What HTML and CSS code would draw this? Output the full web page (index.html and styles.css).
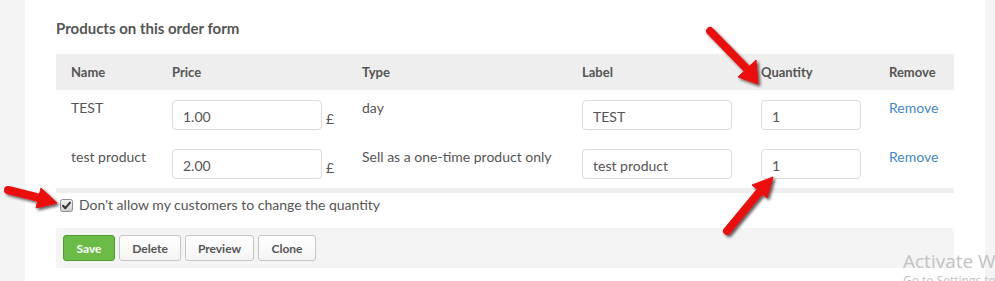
FILE: index.html
```html
<!DOCTYPE html>
<html lang="en">
<head>
<meta charset="utf-8">
<title>Products on this order form</title>
<link rel="stylesheet" href="styles.css">
</head>
<body>
<div class="page">
  <div class="panel">
    <h2 class="title">Products on this order form</h2>
    <table class="products">
      <colgroup>
        <col class="c-name"><col class="c-price"><col class="c-type"><col class="c-label"><col class="c-qty"><col class="c-remove">
      </colgroup>
      <thead>
        <tr><th>Name</th><th>Price</th><th>Type</th><th>Label</th><th>Quantity</th><th>Remove</th></tr>
      </thead>
      <tbody>
        <tr>
          <td>TEST</td>
          <td><div class="price"><input class="field field-price" type="text" value="1.00"><span class="currency">£</span></div></td>
          <td>day</td>
          <td><input class="field field-label" type="text" value="TEST"></td>
          <td><input class="field field-qty" type="text" value="1"></td>
          <td><a class="remove" href="#">Remove</a></td>
        </tr>
        <tr>
          <td class="nowrap">test product</td>
          <td><div class="price"><input class="field field-price" type="text" value="2.00"><span class="currency">£</span></div></td>
          <td class="nowrap">Sell as a one-time product only</td>
          <td><input class="field field-label" type="text" value="test product"></td>
          <td><input class="field field-qty" type="text" value="1"></td>
          <td><a class="remove" href="#">Remove</a></td>
        </tr>
      </tbody>
    </table>
    <label class="check">
      <span class="checkbox"><svg width="13" height="13" viewBox="0 0 13 13"><defs><linearGradient id="cbg" x1="0" y1="0" x2="0" y2="1"><stop offset="0" stop-color="#f2f2f2"/><stop offset="1" stop-color="#cfcfcf"/></linearGradient></defs><rect x="0.5" y="0.5" width="12" height="12" rx="2" fill="url(#cbg)" stroke="#8f8f8f"/><path d="M3 6.8 L5.3 9.2 L10 3.6" fill="none" stroke="#333" stroke-width="2" stroke-linecap="round" stroke-linejoin="round"/></svg></span>
      <span>Don't allow my customers to change the quantity</span>
    </label>
    <div class="actions">
      <button class="btn btn-save" type="button">Save</button>
      <button class="btn btn-delete" type="button">Delete</button>
      <button class="btn btn-preview" type="button">Preview</button>
      <button class="btn btn-clone" type="button">Clone</button>
    </div>
  </div>
</div>
<svg class="arrows" width="995" height="281" viewBox="0 0 995 281">
  <defs>
    <filter id="shadow" x="-20%" y="-20%" width="140%" height="140%">
      <feDropShadow dx="2" dy="2" stdDeviation="1.5" flood-color="#000" flood-opacity="0.65"/>
    </filter>
  </defs>
  <g filter="url(#shadow)" fill="#ec0a0a" stroke="#ec0a0a">
    <line x1="710" y1="31" x2="748" y2="70" stroke-width="8" stroke-linecap="round"/>
    <polygon points="758,84 738,77 756,60" stroke-width="1" stroke-linejoin="round"/>
    <line x1="727" y1="231" x2="761" y2="190" stroke-width="8" stroke-linecap="round"/>
    <polygon points="773,177 767,198 752,185" stroke-width="1" stroke-linejoin="round"/>
    <line x1="8" y1="190" x2="40" y2="198" stroke-width="8" stroke-linecap="round"/>
    <polygon points="57,203 36,208 41,188" stroke-width="1" stroke-linejoin="round"/>
  </g>
</svg>
<div class="watermark">
  <div class="wm-title">Activate Windows</div>
  <div class="wm-sub">Go to Settings to activate Windows.</div>
</div>
</body>
</html>
```

FILE: styles.css
```css
html, body {
  margin: 0;
  padding: 0;
}
body {
  background: #f4f4f4;
  font-family: "Lato", "Liberation Sans", sans-serif;
  color: #555;
  font-size: 14px;
  width: 995px;
  height: 281px;
  overflow: hidden;
  position: relative;
}
.page {
  display: flex;
  padding: 0 10px 0 25px;
  height: 281px;
}
.panel {
  flex: 1;
  background: #fff;
  padding: 0 31px;
}
.title {
  margin: 18px 0 16px;
  font-size: 15px;
  line-height: 20px;
  font-weight: 700;
  color: #555;
}
.products {
  width: 898px;
  border-collapse: collapse;
  table-layout: fixed;
}
.c-name { width: 101px; }
.c-price { width: 190px; }
.c-type { width: 220px; }
.c-label { width: 179px; }
.c-qty { width: 128px; }
.c-remove { width: 80px; }
.products th {
  background: #eeeeee;
  height: 36px;
  padding: 0 15px;
  text-align: left;
  font-weight: 700;
  font-size: 13px;
  color: #555;
}
.products td {
  padding: 10px 15px 9px;
  vertical-align: top;
  line-height: 16px;
  font-size: 14px;
  color: #555;
}
.products tbody tr:last-child td {
  border-bottom: 5px solid #eeeeee;
}
.nowrap { white-space: nowrap; }
.price {
  display: flex;
  align-items: flex-end;
  gap: 4px;
}
.currency {
  line-height: 22px;
}
.field {
  box-sizing: border-box;
  height: 30px;
  border: 1px solid #dcdcdc;
  border-radius: 4px;
  padding: 2px 10px 0;
  font-family: inherit;
  font-size: 14px;
  color: #555;
  background: #fff;
  margin: 0;
}
.field-price { width: 150px; }
.field-label { width: 150px; }
.field-qty { width: 100px; }
.remove {
  color: #3f88c5;
  text-decoration: none;
}
.check {
  display: flex;
  align-items: center;
  gap: 6px;
  margin: 4px 0 0 4px;
  line-height: 16px;
  font-size: 14px;
  color: #555;
}
.checkbox {
  display: flex;
  width: 13px;
  height: 13px;
}
.actions {
  margin-top: 15px;
  background: #f4f4f4;
  border-radius: 3px;
  height: 40px;
  box-sizing: border-box;
  padding: 7px;
  display: flex;
  gap: 4px;
}
.btn {
  height: 26px;
  box-sizing: border-box;
  padding: 0;
  border: 1px solid #c6c6c6;
  border-radius: 3px;
  background: linear-gradient(#ffffff, #f4f4f4);
  font-family: inherit;
  font-weight: 700;
  font-size: 12px;
  color: #555;
}
.btn-save {
  width: 52px;
  background: #6bbb47;
  border-color: #4f9a31;
  color: #fff;
}
.btn-delete { width: 62px; }
.btn-preview { width: 69px; }
.btn-clone { width: 58px; }
.arrows {
  position: absolute;
  left: 0;
  top: 0;
  pointer-events: none;
}
.watermark {
  position: absolute;
  left: 903px;
  top: 249px;
  font-family: "Open Sans", "Noto Sans", sans-serif;
  color: #c3c3c3;
  white-space: nowrap;
  pointer-events: none;
}
.wm-title {
  font-size: 19px;
  line-height: 24px;
}
.wm-sub {
  font-size: 12px;
  line-height: 16px;
}
```
